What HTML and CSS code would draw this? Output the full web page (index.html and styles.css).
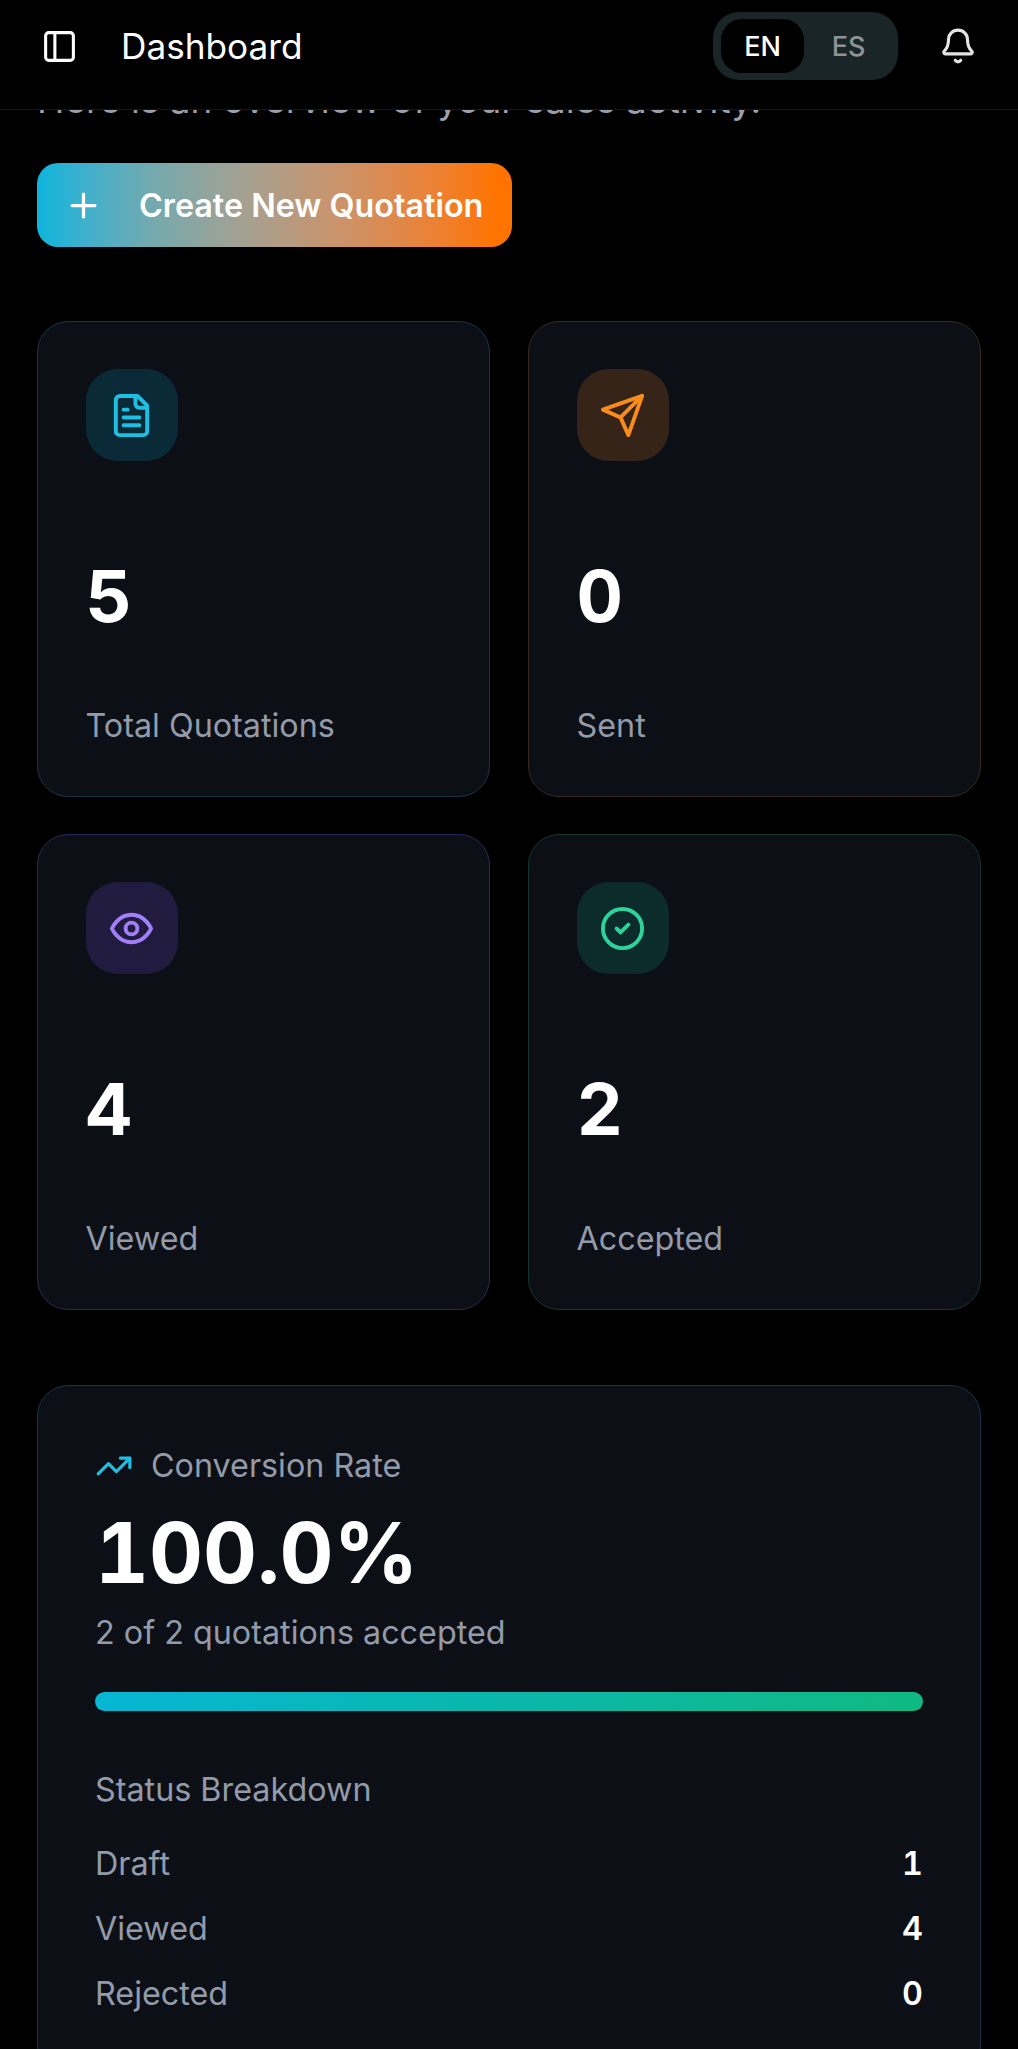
FILE: index.html
```html
<!DOCTYPE html>
<html lang="en">
<head>
    <meta charset="UTF-8">
    <meta name="viewport" content="width=device-width, initial-scale=1.0">
    <title>Dashboard</title>
    <link rel="stylesheet" href="styles.css">
</head>
<body>
    <header class="topbar">
        <div class="topbar-left">
            <svg class="icon-menu" viewBox="0 0 24 24"><rect x="3" y="3" width="18" height="18" rx="2"/><path d="M9 3v18"/></svg>
            <span class="topbar-title">Dashboard</span>
        </div>
        <div class="topbar-right">
            <div class="lang-toggle">
                <span class="lang lang-active">EN</span>
                <span class="lang">ES</span>
            </div>
            <svg class="icon-bell" viewBox="0 0 24 24"><path d="M10.268 21a2 2 0 0 0 3.464 0"/><path d="M3.262 15.326A1 1 0 0 0 4 17h16a1 1 0 0 0 .74-1.673C19.41 13.956 18 12.499 18 8A6 6 0 0 0 6 8c0 4.499-1.411 5.956-2.738 7.326"/></svg>
        </div>
    </header>

    <main class="content">
        <p class="intro">Here is an overview of your sales activity.</p>

        <button class="create-btn" type="button">
            <svg class="icon-plus" viewBox="0 0 24 24"><path d="M5 12h14"/><path d="M12 5v14"/></svg>
            <span>Create New Quotation</span>
        </button>

        <section class="stats">
            <div class="stat-card stat-cyan">
                <div class="stat-icon">
                    <svg viewBox="0 0 24 24"><path d="M15 2H6a2 2 0 0 0-2 2v16a2 2 0 0 0 2 2h12a2 2 0 0 0 2-2V7Z"/><path d="M14 2v4a2 2 0 0 0 2 2h4"/><path d="M10 9H8"/><path d="M16 13H8"/><path d="M16 17H8"/></svg>
                </div>
                <div class="stat-value">5</div>
                <div class="stat-label">Total Quotations</div>
            </div>
            <div class="stat-card stat-orange">
                <div class="stat-icon">
                    <svg viewBox="0 0 24 24"><path d="m22 2-7 20-4-9-9-4Z"/><path d="M22 2 11 13"/></svg>
                </div>
                <div class="stat-value">0</div>
                <div class="stat-label">Sent</div>
            </div>
            <div class="stat-card stat-purple">
                <div class="stat-icon">
                    <svg viewBox="0 0 24 24"><path d="M2 12s3-7 10-7 10 7 10 7-3 7-10 7-10-7-10-7Z"/><circle cx="12" cy="12" r="3"/></svg>
                </div>
                <div class="stat-value">4</div>
                <div class="stat-label">Viewed</div>
            </div>
            <div class="stat-card stat-green">
                <div class="stat-icon">
                    <svg viewBox="0 0 24 24"><circle cx="12" cy="12" r="10"/><path d="m9 12 2 2 4-4"/></svg>
                </div>
                <div class="stat-value">2</div>
                <div class="stat-label">Accepted</div>
            </div>
        </section>

        <section class="conversion">
            <div class="conversion-head">
                <svg class="icon-trend" viewBox="0 0 24 24"><path d="M22 7 13.5 15.5 8.5 10.5 2 17"/><path d="M16 7h6v6"/></svg>
                <span>Conversion Rate</span>
            </div>
            <div class="conversion-value">100.0%</div>
            <div class="conversion-sub">2 of 2 quotations accepted</div>
            <div class="progress"><div class="progress-fill"></div></div>

            <div class="breakdown-title">Status Breakdown</div>
            <div class="breakdown">
                <div class="breakdown-row"><span>Draft</span><strong>1</strong></div>
                <div class="breakdown-row"><span>Viewed</span><strong>4</strong></div>
                <div class="breakdown-row"><span>Rejected</span><strong>0</strong></div>
            </div>
        </section>
    </main>
</body>
</html>
```

FILE: styles.css
```css
html, body {
    margin: 0;
    height: 2049px;
    overflow: hidden;
    background-color: #000;
}

body {
    font-family: "Inter", "Liberation Sans", sans-serif;
    color: #fff;
}

svg {
    display: block;
    fill: none;
    stroke: currentColor;
    stroke-width: 2;
    stroke-linecap: round;
    stroke-linejoin: round;
    flex-shrink: 0;
}

.topbar {
    position: fixed;
    top: 0;
    left: 0;
    right: 0;
    z-index: 10;
    height: 110px;
    padding: 0 41px 17px 41px;
    box-sizing: border-box;
    display: flex;
    align-items: center;
    justify-content: space-between;
    background-color: #000;
    border-bottom: 1px solid #131719;
}

.topbar-left,
.topbar-right {
    display: flex;
    align-items: center;
}

.topbar-left {
    gap: 43px;
}

.topbar-right {
    gap: 41px;
}

.icon-menu {
    width: 37px;
    height: 37px;
}

.topbar-title {
    font-size: 35.2px;
    line-height: 44px;
    font-weight: 400;
}

.lang-toggle {
    display: flex;
    align-items: center;
    width: 185px;
    height: 68px;
    padding: 0 8px;
    box-sizing: border-box;
    border-radius: 26px;
    background-color: #1a2528;
}

.lang {
    width: 83px;
    height: 54px;
    display: flex;
    align-items: center;
    justify-content: center;
    font-size: 27px;
    font-weight: 500;
    color: #8d9396;
}

.lang + .lang {
    margin-left: 3px;
}

.lang-active {
    border-radius: 21px;
    background-color: #000;
    color: #fff;
}

.icon-bell {
    width: 38px;
    height: 38px;
    color: #e4e4e4;
}

.content {
    padding: 75px 37px 0;
}

.intro {
    margin: 0;
    font-size: 36.9px;
    line-height: 50px;
    color: #9aa1ad;
}

.create-btn {
    display: flex;
    align-items: center;
    gap: 36px;
    width: 475px;
    height: 84px;
    margin-top: 38px;
    padding: 0 0 0 27px;
    border: 0;
    border-radius: 21px;
    background: linear-gradient(90deg, #0eb5dc 0%, #3fb0cd 10%, #76a9ad 25%, #a8a08f 45%, #cd9268 65%, #ee8030 85%, #ff7300 97%);
    color: #fff;
    font-family: inherit;
    font-size: 32.3px;
    font-weight: 600;
}

.icon-plus {
    width: 39px;
    height: 39px;
}

.stats {
    display: grid;
    grid-template-columns: 1fr 1fr;
    column-gap: 38px;
    row-gap: 37px;
    margin-top: 74px;
}

.stat-card {
    height: 476px;
    padding: 47px 47.5px;
    box-sizing: border-box;
    border: 1.5px solid #1a3448;
    border-radius: 31px;
    background-color: #0c1016;
}

.stat-icon {
    width: 92px;
    height: 92px;
    display: flex;
    align-items: center;
    justify-content: center;
    border-radius: 32px;
}

.stat-icon svg {
    width: 47px;
    height: 47px;
}

.stat-cyan .stat-icon { background-color: #0b2a37; color: #1fbfe3; }
.stat-orange { border-color: #38291f; }
.stat-orange .stat-icon { background-color: #352417; color: #f98c1c; }
.stat-purple { border-color: #2a2858; }
.stat-purple .stat-icon { background-color: #211c3f; color: #a27ff6; }
.stat-green { border-color: #17362f; }
.stat-green .stat-icon { background-color: #0c2b2b; color: #2dd39a; }

.stat-value {
    margin-top: 93px;
    font-size: 72px;
    line-height: 84px;
    font-weight: 700;
    font-variant-numeric: tabular-nums;
}

.stat-label {
    margin-top: 67px;
    font-size: 32.3px;
    line-height: 42px;
    color: #939baa;
}

.conversion {
    margin-top: 75px;
    padding: 59px 57px 60px;
    border: 1.5px solid #1a3448;
    border-radius: 31px;
    background-color: #0c1016;
}

.conversion-head {
    display: flex;
    align-items: center;
    gap: 18px;
    font-size: 32.3px;
    line-height: 42px;
    color: #939baa;
}

.icon-trend {
    width: 38px;
    height: 38px;
    color: #1fbfe3;
}

.conversion-value {
    margin-top: 18px;
    font-size: 83.6px;
    line-height: 96px;
    font-weight: 700;
    font-variant-numeric: tabular-nums;
}

.conversion-sub {
    margin-top: 11px;
    font-size: 32.3px;
    line-height: 42px;
    color: #939baa;
}

.progress {
    height: 19px;
    margin-top: 38px;
    border-radius: 10px;
    background-color: #1a2528;
    overflow: hidden;
}

.progress-fill {
    width: 100%;
    height: 100%;
    background: linear-gradient(90deg, #06b6d4, #10b981);
}

.breakdown-title {
    margin-top: 58px;
    font-size: 32.3px;
    line-height: 42px;
    color: #939baa;
}

.breakdown {
    display: flex;
    flex-direction: column;
    gap: 23px;
    margin-top: 31.5px;
}

.breakdown-row {
    display: flex;
    justify-content: space-between;
    font-size: 32.3px;
    line-height: 42px;
    color: #939baa;
}

.breakdown-row strong {
    font-weight: 600;
    color: #fff;
    font-variant-numeric: tabular-nums;
}
```
